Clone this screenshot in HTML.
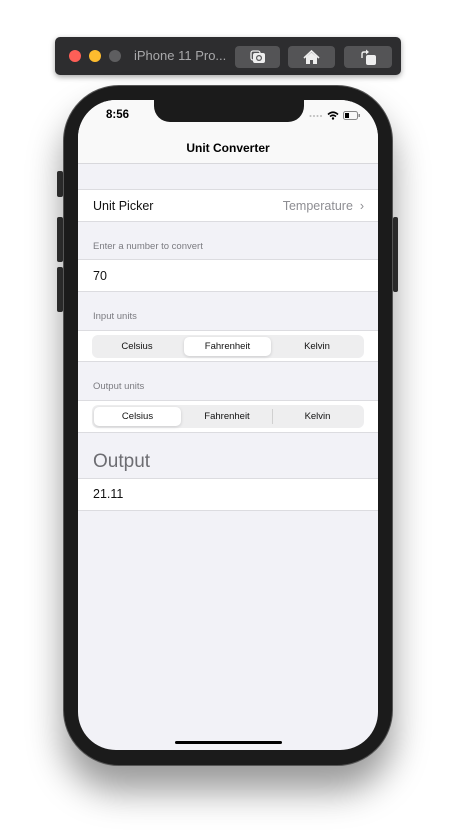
<!DOCTYPE html>
<html><head><meta charset="utf-8"><style>
*{margin:0;padding:0;box-sizing:border-box}
body{width:456px;height:840px;background:#fff;position:relative;overflow:hidden;font-family:"Liberation Sans",sans-serif}
.abs{position:absolute}
.tb{left:55px;top:37px;width:346px;height:38px;background:#2d2d2f;border-radius:5px;box-shadow:0 2px 6px rgba(0,0,0,.35)}
.dot{width:12px;height:12px;border-radius:50%;top:13px}
.btn{top:9px;height:22px;background:#545456;border-radius:4px}
.phone{left:63px;top:85px;width:330px;height:681px;background:#1b1b1b;border-radius:56px;box-shadow:0 25px 35px rgba(0,0,0,.4);border:1px solid #555}
.screen{left:78px;top:100px;width:300px;height:650px;background:#f2f2f7;border-radius:38px;overflow:hidden}
.row{position:absolute;left:0;width:300px;background:#fff;border-top:1px solid #dcdce0;border-bottom:1px solid #dcdce0;font-size:12.5px;color:#111}
.lbl{position:absolute;left:15px;font-size:9.5px;color:#7b7b80}
.seg{position:absolute;left:14px;width:272px;height:23px;background:#eeeeef;border-radius:6px;font-size:9.5px;color:#111}
.seg span{position:absolute;top:0;width:90px;height:23px;line-height:23px;text-align:center}
.sel{background:#fff;border-radius:5px;top:2px!important;height:19px!important;line-height:19px!important;box-shadow:0 1px 3px rgba(0,0,0,.15)}
</style></head><body>
<div class="abs tb">
 <div class="abs dot" style="left:14px;background:#fe5f57"></div>
 <div class="abs dot" style="left:34px;background:#febc2e"></div>
 <div class="abs dot" style="left:54px;background:#5e5e60"></div>
 <div class="abs" style="left:79px;top:11px;color:#a8a8aa;font-size:13px">iPhone 11 Pro...</div>
 <div class="abs btn" style="left:180px;width:45px"><svg width="45" height="22"><rect x="16" y="5" width="9" height="9" rx="2" fill="none" stroke="#eee" stroke-width="1.3"/><rect x="18" y="7" width="12" height="10" rx="2" fill="#eee"/><circle cx="24" cy="12" r="3" fill="#545456"/><circle cx="24" cy="12" r="1.8" fill="#eee"/></svg></div>
 <div class="abs btn" style="left:233px;width:47px"><svg width="47" height="22"><path d="M16 12 L23.5 5 L31 12" fill="none" stroke="#eee" stroke-width="1.6"/><path d="M18 11 L23.5 6.5 L29 11 V18 H25 V14 H22 V18 H18Z" fill="#eee"/></svg></div>
 <div class="abs btn" style="left:289px;width:48px"><svg width="48" height="22"><rect x="22" y="9" width="10" height="10" rx="2" fill="#eee"/><path d="M18 12 V8 Q18 6 20 6 H23" fill="none" stroke="#eee" stroke-width="1.4"/><path d="M22 3.5 L25 6 L22 8.5Z" fill="#eee"/></svg></div>
</div>
<div class="abs" style="left:57px;top:171px;width:6px;height:26px;background:#333;border-radius:2px"></div>
<div class="abs" style="left:57px;top:217px;width:6px;height:45px;background:#333;border-radius:2px"></div>
<div class="abs" style="left:57px;top:267px;width:6px;height:45px;background:#333;border-radius:2px"></div>
<div class="abs" style="left:393px;top:217px;width:5px;height:75px;background:#333;border-radius:2px"></div>
<div class="abs phone"></div>
<div class="abs screen">
 <div class="abs" style="left:0;top:0;width:300px;height:64px;background:#f9f9f9;border-bottom:1px solid #d8d8dc"></div>
 <div class="abs" style="left:76px;top:-2px;width:150px;height:24px;background:#1b1b1b;border-radius:0 0 16px 16px"></div>
 <div class="abs" style="left:28px;top:9px;font-size:11.5px;font-weight:bold;color:#000">8:56</div>
 <svg class="abs" style="left:231px;top:14px" width="14" height="4"><circle cx="1.5" cy="2" r="1" fill="#bbb"/><circle cx="5" cy="2" r="1" fill="#bbb"/><circle cx="8.5" cy="2" r="1" fill="#bbb"/><circle cx="12" cy="2" r="1" fill="#bbb"/></svg>
 <svg class="abs" style="left:249px;top:11px" width="12" height="9"><path d="M1 3.5 Q6 -1 11 3.5" stroke="#000" stroke-width="1.6" fill="none"/><path d="M3 5.5 Q6 3 9 5.5" stroke="#000" stroke-width="1.6" fill="none"/><circle cx="6" cy="7.5" r="1.2"/></svg>
 <svg class="abs" style="left:265px;top:11px" width="18" height="9"><rect x=".5" y=".5" width="14" height="8" rx="2" fill="none" stroke="#888"/><rect x="2" y="2" width="4" height="5" fill="#000"/><rect x="15.5" y="3" width="1.5" height="3" fill="#888"/></svg>
 <div class="abs" style="left:0;width:300px;top:41px;text-align:center;font-size:12px;font-weight:bold;color:#000">Unit Converter</div>
 <div class="row" style="top:89px;height:33px"><span class="abs" style="left:15px;top:9px">Unit Picker</span><span class="abs" style="right:14px;top:9px;color:#8e8e93">Temperature &nbsp;›</span></div>
 <div class="lbl" style="top:141px">Enter a number to convert</div>
 <div class="row" style="top:159px;height:33px"><span class="abs" style="left:15px;top:9px">70</span></div>
 <div class="lbl" style="top:211px">Input units</div>
 <div class="row" style="top:230px;height:32px"><div class="seg" style="top:4px"><span style="left:0">Celsius</span><span class="sel" style="left:92px;width:87px">Fahrenheit</span><span style="left:180px">Kelvin</span></div></div>
 <div class="lbl" style="top:281px">Output units</div>
 <div class="row" style="top:300px;height:33px"><div class="seg" style="top:4px"><span class="sel" style="left:2px;width:87px">Celsius</span><span style="left:90px">Fahrenheit</span><span style="left:180px;border-left:1px solid #d0d0d0;height:15px;top:4px;line-height:15px">Kelvin</span></div></div>
 <div class="abs" style="left:15px;top:351px;font-size:19px;color:#6d6d72">Output</div>
 <div class="row" style="top:378px;height:33px"><span class="abs" style="left:15px;top:8px">21.11</span></div>
 <div class="abs" style="left:97px;top:641px;width:107px;height:3px;background:#000;border-radius:2px"></div>
</div>
</body></html>
